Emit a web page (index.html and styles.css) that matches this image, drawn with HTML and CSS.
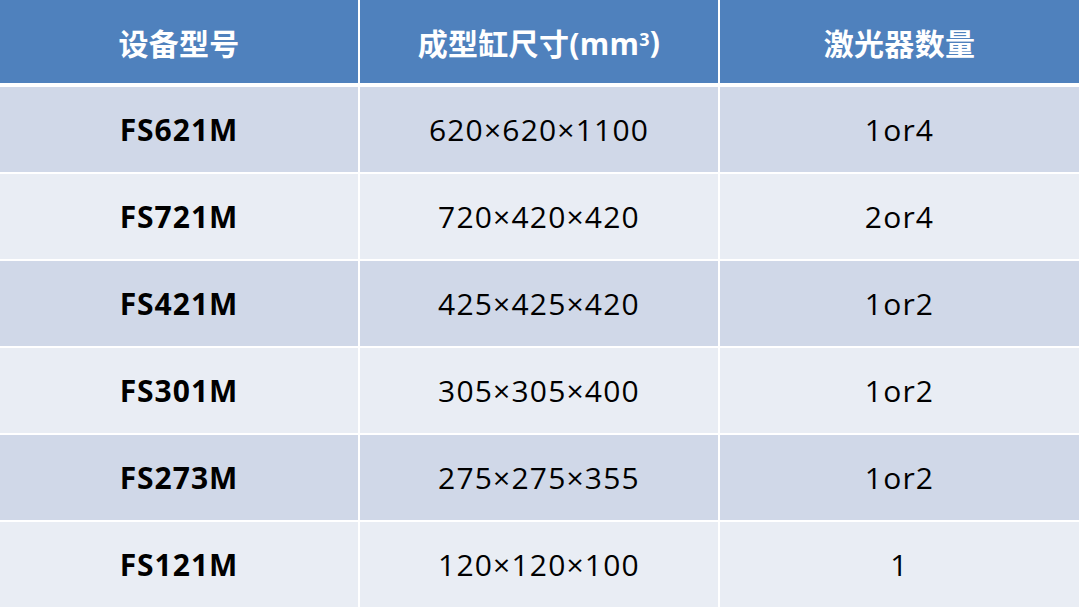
FILE: index.html
```html
<!DOCTYPE html>
<html lang="zh-CN">
<head>
<meta charset="utf-8">
<link rel="stylesheet" href="styles.css">
<title>设备型号</title>
</head>
<body>
<div class="table">
  <div class="row head">
    <div class="cell">设备型号</div>
    <div class="cell">成型缸尺寸(mm<sup>3</sup>)</div>
    <div class="cell">激光器数量</div>
  </div>
  <div class="body">
    <div class="row odd">
      <div class="cell model">FS621M</div>
      <div class="cell">620×620×1100</div>
      <div class="cell">1or4</div>
    </div>
    <div class="row even">
      <div class="cell model">FS721M</div>
      <div class="cell">720×420×420</div>
      <div class="cell">2or4</div>
    </div>
    <div class="row odd">
      <div class="cell model">FS421M</div>
      <div class="cell">425×425×420</div>
      <div class="cell">1or2</div>
    </div>
    <div class="row even">
      <div class="cell model">FS301M</div>
      <div class="cell">305×305×400</div>
      <div class="cell">1or2</div>
    </div>
    <div class="row odd">
      <div class="cell model">FS273M</div>
      <div class="cell">275×275×355</div>
      <div class="cell">1or2</div>
    </div>
    <div class="row even">
      <div class="cell model">FS121M</div>
      <div class="cell">120×120×100</div>
      <div class="cell">1</div>
    </div>
  </div>
</div>
</body>
</html>
```
FILE: styles.css
```css
html, body {
  margin: 0;
  padding: 0;
  background: #ffffff;
}
body {
  width: 1080px;
  height: 610px;
  overflow: hidden;
  font-family: "Open Sans", "Noto Sans CJK SC", sans-serif;
}
.table {
  display: flex;
  flex-direction: column;
  padding-right: 1px;
}
.row {
  display: grid;
  grid-template-columns: 358px 358px 359px;
  column-gap: 2px;
}
.body {
  display: flex;
  flex-direction: column;
  row-gap: 2px;
  margin-top: 4px;
}
.cell {
  display: flex;
  align-items: center;
  justify-content: center;
  font-size: 30px;
  color: #000000;
  letter-spacing: 1.2px;
}
.head .cell {
  height: 83px;
  background: #4f81bd;
  color: #ffffff;
  font-weight: 700;
  font-size: 30px;
  letter-spacing: 0.3px;
}
.head sup {
  font-size: 18px;
  line-height: 1;
  position: relative;
  top: -3px;
  vertical-align: super;
}
.odd .cell, .even .cell {
  height: 85px;
}
.odd .cell {
  background: #d0d8e8;
}
.even .cell {
  background: #e9edf4;
}
.model {
  font-weight: 700;
  font-size: 30px;
  letter-spacing: 1px;
}
```
